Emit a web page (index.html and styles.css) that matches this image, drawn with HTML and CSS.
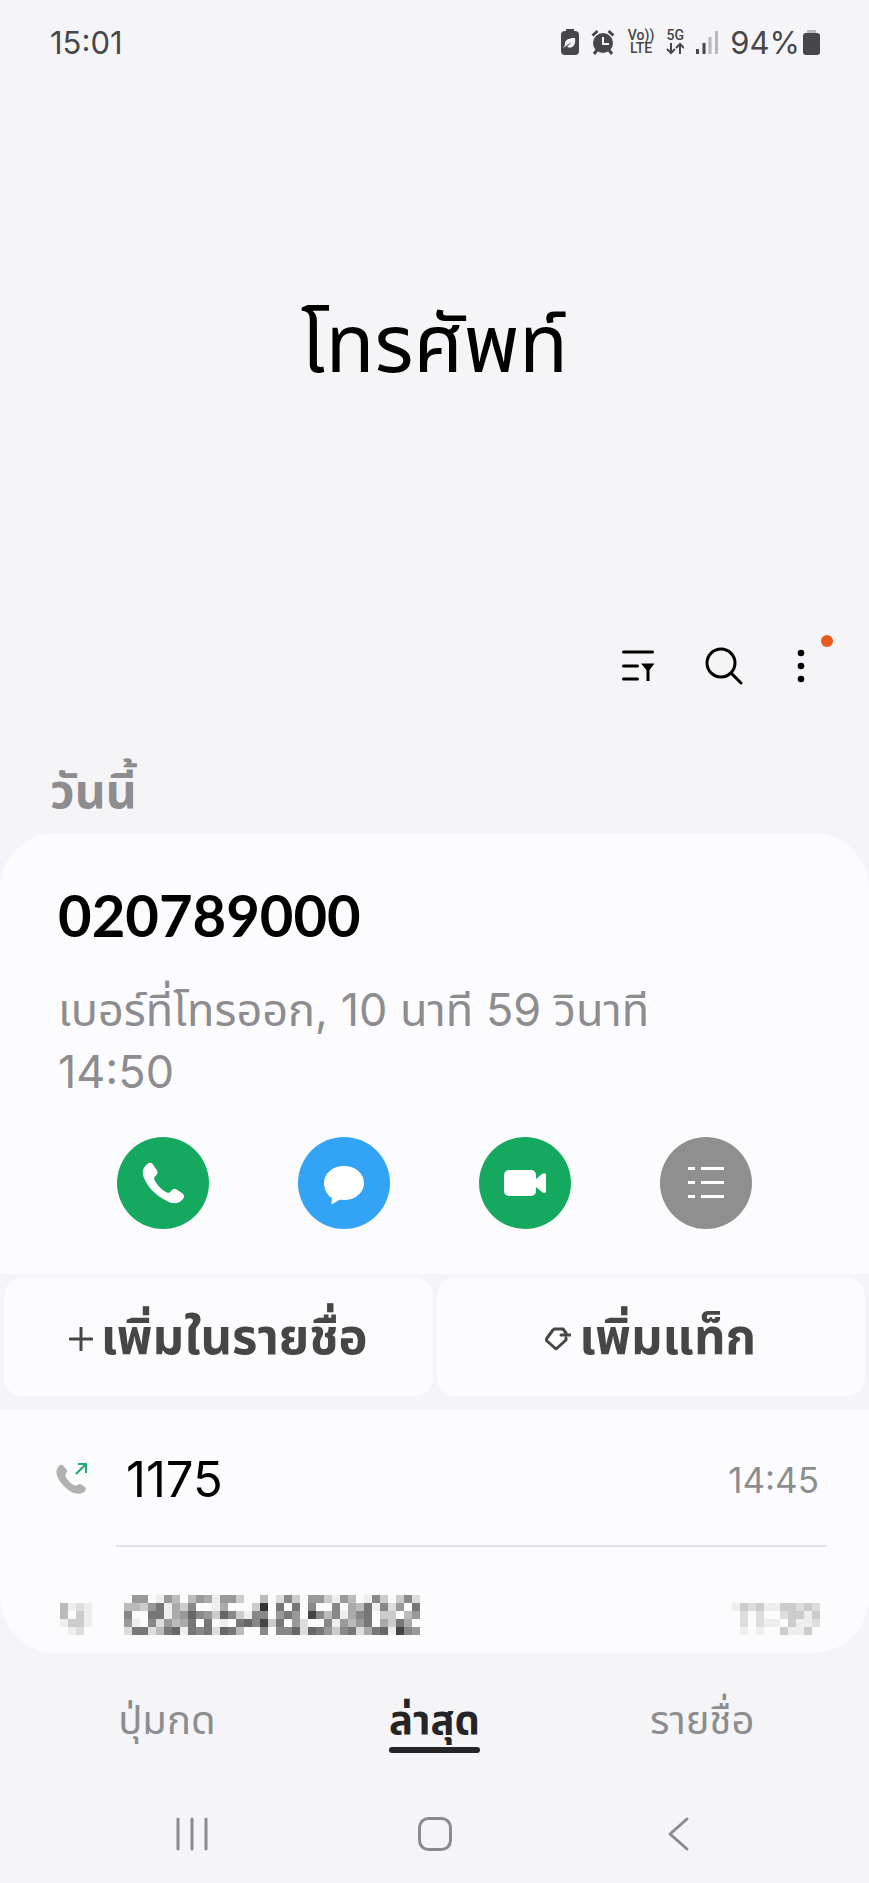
FILE: index.html
```html
<!DOCTYPE html>
<html lang="th">
<head>
<meta charset="utf-8">
<meta name="viewport" content="width=device-width, initial-scale=1">
<title>โทรศัพท์</title>
<link rel="stylesheet" href="styles.css">
</head>
<body>
<div class="screen">
  <header class="status">
    <time class="clock">15:01</time>
    <div class="status-icons">
      <svg width="18" height="26" viewBox="0 0 18 26" aria-hidden="true"><path fill="#47474a" d="M5 0h8v2h1a4 4 0 0 1 4 4v16a4 4 0 0 1-4 4H4a4 4 0 0 1-4-4V6a4 4 0 0 1 4-4h1z"/><path fill="#f5f5f8" d="M4 16C3 10 9 9 14 9c1 8-3 11-8 9l5-5-9 6z"/></svg>
      <svg width="25" height="26" viewBox="0 0 25 26" aria-hidden="true"><circle cx="12" cy="14" r="10" fill="#47474a"/><path d="M1.500 6.500l5-4.500M22.500 6.500L17.500 2M6 21l-3 4M18 21l3 4" stroke="#47474a" stroke-width="3" fill="none"/><path d="M12 8v7h6" stroke="#f5f5f8" stroke-width="2" fill="none"/></svg>
      <span class="stack"><span>Vo))</span><span>LTE</span></span>
      <span class="stack"><span>5G</span><svg width="18" height="13" viewBox="0 0 18 13" aria-hidden="true"><path d="M5 1v10M1 7l4 4 4-4M14 12V2M10 6l4-4 4 4" stroke="#47474a" stroke-width="2" fill="none"/></svg></span>
      <svg width="22" height="25" viewBox="0 0 22 25" aria-hidden="true"><path d="M1.500 19v5M8 13v11" stroke="#47474a" stroke-width="3"/><path d="M14 7v17M20.500 1v23" stroke="#b9b9bb" stroke-width="3"/></svg>
      <span class="battery">94%<svg width="17" height="25" viewBox="0 0 17 25" aria-hidden="true"><path fill="#b9b9bb" d="M4 0h9v3H4z"/><path fill="#47474a" d="M3 3h11a3 3 0 0 1 3 3v16a3 3 0 0 1-3 3H3a3 3 0 0 1-3-3V6a3 3 0 0 1 3-3z"/></svg></span>
    </div>
  </header>

  <div class="hero"><h1>โทรศัพท์</h1></div>

  <div class="toolbar">
    <button class="tool" aria-label="ตัวกรอง"><svg width="34" height="34" viewBox="0 0 34 34"><path d="M2.500 3h29M2.500 17h14M2.500 30h14" stroke="#000" stroke-width="3" stroke-linecap="round"/><path d="M20 14.500h13.500L28.500 21v11h-3V21z"/></svg></button>
    <button class="tool" aria-label="ค้นหา"><svg width="38" height="38" viewBox="0 0 38 38" fill="none" stroke="#000" stroke-width="3" stroke-linecap="round"><circle cx="16" cy="16" r="14"/><path d="M26 26l10 10"/></svg></button>
    <button class="tool more" aria-label="ตัวเลือกเพิ่มเติม"><svg width="16" height="34" viewBox="0 0 16 34"><circle cx="8" cy="4" r="3.300"/><circle cx="8" cy="17" r="3.300"/><circle cx="8" cy="30" r="3.300"/></svg><span class="badge"></span></button>
  </div>

  <main>
    <h2>วันนี้</h2>
    <section class="card">
      <div class="detail">
        <h3>020789000</h3>
        <p>เบอร์ที่โทรออก, 10 นาที 59 วินาที<br>14:50</p>
        <div class="actions">
          <button class="round green" aria-label="โทร"><svg width="92" height="92" viewBox="0 0 92 92"><path fill="#fff" d="M31 26.500c2-1.500 3.500-1 5 1l4 6c1 2 .5 3.500-1 5-2 2-2.500 3-1 5.500 3 5 6.500 8.500 11 11 2.500 1.500 3.500 1 5-1 2-2 3.500-2.500 5.500-1.500l6 4c2 1.500 2 3.500.5 5.500-4 5-10 5.500-16 2C38 58 31 50 27 41c-2.500-6-1-11 4-14.500z"/></svg></button>
          <button class="round blue" aria-label="ข้อความ"><svg width="92" height="92" viewBox="0 0 92 92"><path fill="#fff" d="M46 29c11.500 0 20 7.500 20 17s-8.500 17-20 17c-1.500 0-3-.2-4-.2-3 1-6 4-8.500 4.500-.8-.3 1-3.800.3-6.300C29 58 26 52 26 46c0-9.500 8.500-17 20-17z"/></svg></button>
          <button class="round green" aria-label="วิดีโอคอล"><svg width="92" height="92" viewBox="0 0 92 92"><rect x="25" y="33" width="32" height="26" rx="5" fill="#fff"/><path fill="#fff" d="M57 42l6-5c2-1.500 4-1 4 1v16c0 2-2 2.500-4 1l-6-5z"/></svg></button>
          <button class="round gray" aria-label="รายละเอียด"><svg width="92" height="92" viewBox="0 0 92 92"><path d="M28 31.500h7M41 31.500h23M28 45.500h7M41 45.500h23M28 59.500h7M41 59.500h23" stroke="#fff" stroke-width="3"/></svg></button>
        </div>
      </div>

      <div class="adds">
        <button class="add"><svg width="24" height="24" viewBox="0 0 24 24" fill="none" stroke="#464646" stroke-width="3" stroke-linecap="round"><path d="M12 1v22M1 12h22"/></svg>เพิ่มในรายชื่อ</button>
        <button class="add"><svg width="26" height="24" viewBox="0 0 26 24" fill="none" stroke="#464646" stroke-width="3" stroke-linecap="round" stroke-linejoin="round"><path d="M21 11v2L11 22 2 14c-1-1-.5-2 0-3l6-8q1-1 2-1h8l3 4M16 8h9"/></svg>เพิ่มแท็ก</button>
      </div>

      <ul class="calls">
        <li class="call">
          <svg width="32" height="32" viewBox="0 0 32 32" aria-hidden="true"><path fill="#b0b0b0" d="M3 3c1.500-1.500 3-1.700 4.500 0l3 3.500c1 1.500.5 2.500-.5 4-1 1.300-1 2.500 0 4 2 3 4.500 5.500 7.500 7.500 1.500 1 2.500 1 4 0 1.500-1 2.500-1.500 4-.5L29 24c1.500 1.500 1 3-.5 4.500-4 3.500-9 2.500-14 0C8 24 3 18.500.8 12 0 8.500.5 5.500 3 3z"/><path d="M20 11L30 1M22 1h8v9" stroke="#21a974" stroke-width="2" fill="none"/></svg>
          <div class="call-body">
            <span class="number">1175</span>
            <time>14:45</time>
          </div>
        </li>
        <li class="call hidden-call">
          <svg class="mosaic" data-rows="fbede fbfce fecce ffedf"></svg>
          <svg class="mosaic number" data-rows="f99fe9bfb9ae99cffbfd8cf99ce9bfe8cfc8d bbc97eac8ffeafffc3f7f7f8ff8fab7e8d9f7 8ff77ea9689c68ce88f979f48b8ea87fccfb9 9ef8d9ba7f7fef7684c7f9dff8e9b97fac7af d77db76e787d67bff8f886d679c87da76e489"></svg>
          <svg class="mosaic" data-rows="ecdceeccdcd fdfdffdccec fdfdeefceed fefeffceecf"></svg>
        </li>
      </ul>
    </section>
  </main>

  <nav class="tabs">
    <a href="#keypad">ปุ่มกด</a>
    <a href="#recents" class="active" aria-current="page">ล่าสุด</a>
    <a href="#contacts">รายชื่อ</a>
  </nav>
  <div class="system">
    <button aria-label="แอปล่าสุด"><svg width="36" height="36" viewBox="0 0 36 36"><path d="M4 3v30M18 3v30M32 3v30" stroke="#8b8b8d" stroke-width="3" stroke-linecap="round"/></svg></button>
    <button aria-label="หน้าหลัก"><svg width="36" height="36" viewBox="0 0 36 36"><rect x="2.500" y="2.500" width="31" height="31" rx="9" fill="none" stroke="#8b8b8d" stroke-width="3"/></svg></button>
    <button aria-label="ย้อนกลับ"><svg width="36" height="36" viewBox="0 0 36 36"><path d="M27 3L10 18l17 15" fill="none" stroke="#8b8b8d" stroke-width="3" stroke-linecap="round" stroke-linejoin="round"/></svg></button>
  </div>
</div>
<script src="mosaic.js"></script>
</body>
</html>
```

FILE: styles.css
```css
* { box-sizing: border-box; }
body { margin: 0; background: #f5f5f8; color: #000; font-family: Inter, "Noto Sans Thai", "Noto Sans", sans-serif; }
button { border: 0; padding: 0; background: none; font: inherit; color: inherit; display: flex; align-items: center; justify-content: center; }
svg { display: block; flex: none; }
h1, h2, h3, p, ul { margin: 0; padding: 0; }
.screen { min-height: 100vh; display: flex; flex-direction: column; }

.status { height: 84px; padding: 0 49px 0 50px; display: flex; align-items: center; justify-content: space-between; color: #47474a; font-size: 31px; }
.status-icons { display: flex; align-items: center; gap: 12px; }
.stack { display: flex; flex-direction: column; align-items: center; font: 500 14px/13px Roboto, sans-serif; }
.battery { display: flex; align-items: center; gap: 3px; }

.hero { height: 536px; display: flex; justify-content: center; padding-top: 204px; }
h1 { font-size: 80px; line-height: 110px; font-weight: 400; }

.toolbar { height: 92px; display: flex; align-items: center; justify-content: flex-end; gap: 50px; padding-right: 60px; }
.tool { position: relative; height: 40px; }
.badge { position: absolute; right: -24px; top: -11px; width: 12px; height: 12px; border-radius: 50%; background: #e8591c; }

h2 { padding-left: 50px; height: 121px; line-height: 158px; font-size: 48px; color: #8d8d8f; }
.card { background: #fcfcfe; border-radius: 56px; overflow: hidden; }
.detail { padding: 44px 58px 45px; }
h3 { font-family: Lato, sans-serif; font-size: 58px; line-height: 76px; }
.detail p { padding-top: 26px; font-size: 45px; line-height: 62px; color: #8d8d8f; }
.actions { display: grid; grid-template-columns: repeat(4, 1fr); justify-items: center; padding: 34px 14px 0; }
.round { width: 92px; height: 92px; border-radius: 50%; }
.green { background: #14a95f; }
.blue { background: #32a3f5; }
.gray { background: #8f8f8f; }

.adds { display: grid; grid-template-columns: 1fr 1fr; gap: 4px; padding: 4px 4px 14px; background: #f5f5f8; }
.add { height: 118px; padding-top: 4px; border-radius: 18px; background: #fcfcfe; font-size: 49px; font-weight: 700; color: #464646; gap: 8px; }

.calls { list-style: none; }
.call { height: 137px; display: flex; align-items: center; gap: 28px; padding: 0 42px 0 56px; }
.call-body { flex: 1; height: 100%; display: flex; align-items: center; justify-content: space-between; padding: 4px 8px 0 10px; border-bottom: 2px solid #e2e2e4; }
.number { font-size: 49px; }
.call time { font-size: 35px; color: #8d8d8f; }
.hidden-call { height: 106px; align-items: flex-end; gap: 32px; padding: 0 49px 18px 52px; }
.hidden-call .number { margin-right: auto; }

.tabs { display: grid; grid-template-columns: repeat(3, 1fr); justify-items: center; font-size: 40px; line-height: 58px; padding: 38px 33px 0; }
.tabs a { color: #8d8d8f; text-decoration: none; }
.tabs .active { position: relative; font-weight: 700; color: #252527; }
.tabs .active::after { content: ""; position: absolute; left: 0; right: 0; top: 56px; height: 6px; border-radius: 3px; background: #252527; }
.system { display: grid; grid-template-columns: repeat(3, 1fr); justify-items: center; padding: 67px 70px 30px; }
```

FILE: mosaic.js
```js
// Draws masked call details as 8px blocks; each hex digit is a shade of gray.
const CELL = 8;
document.querySelectorAll(".mosaic").forEach((svg) => {
  const rows = svg.dataset.rows.split(" ");
  const width = rows[0].length * CELL;
  const height = rows.length * CELL;
  svg.setAttribute("width", width);
  svg.setAttribute("height", height);
  svg.setAttribute("aria-hidden", "true");
  rows.forEach((row, y) => {
    [...row].forEach((digit, x) => {
      if (digit === "f") return;
      const rect = document.createElementNS("http://www.w3.org/2000/svg", "rect");
      rect.setAttribute("x", x * CELL);
      rect.setAttribute("y", y * CELL);
      rect.setAttribute("width", CELL);
      rect.setAttribute("height", CELL);
      rect.setAttribute("fill", "#" + digit.repeat(3));
      svg.appendChild(rect);
    });
  });
});
```
